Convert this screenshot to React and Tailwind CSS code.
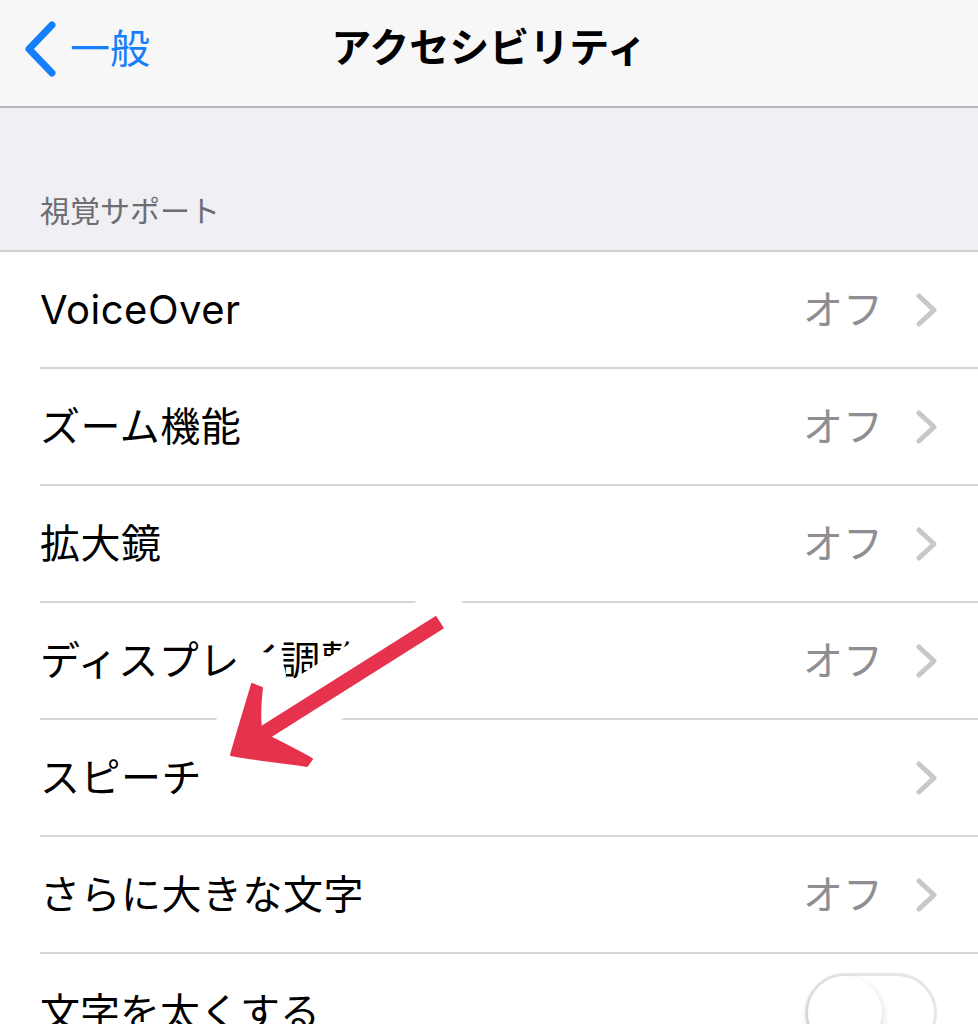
import React from "react";

const rows = [
  { label: "VoiceOver", value: "オフ" },
  { label: "ズーム機能", value: "オフ" },
  { label: "拡大鏡", value: "オフ" },
  { label: "ディスプレイ調整", value: "オフ" },
  { label: "スピーチ", value: "" },
  { label: "さらに大きな文字", value: "オフ" },
];

function Chevron() {
  return (
    <svg width="22" height="34" viewBox="0 0 22 34" className="shrink-0">
      <path
        d="M3 3 L18 17 L3 31"
        fill="none"
        stroke="#c7c7cc"
        strokeWidth="5"
        strokeLinecap="round"
        strokeLinejoin="round"
      />
    </svg>
  );
}

function Row({ label, value }) {
  return (
    <div className="pl-[40px] bg-white">
      <div className="h-[117px] flex items-center justify-between pr-[40px] border-b-2 border-[#d6d6da]">
        <span className="text-[40px] text-black tracking-[0.5px]">{label}</span>
        <div className="flex items-center gap-[33px]">
          {value && <span className="text-[40px] text-[#8e8e93]">{value}</span>}
          <Chevron />
        </div>
      </div>
    </div>
  );
}

function Arrow() {
  const head =
    "M231,755 C238,730 246,705 252,684 L262,688 C260,705 259,720 262,733 C280,742 296,750 312,759 L307,766 C282,762 256,760 231,755 Z";
  return (
    <svg
      className="absolute left-0 top-0 pointer-events-none"
      width="978"
      height="1024"
      viewBox="0 0 978 1024"
    >
      {/* white halo */}
      <line x1="440" y1="622" x2="258" y2="737" stroke="#fff" strokeWidth="60" strokeLinecap="round" />
      <path d={head} fill="#fff" stroke="#fff" strokeWidth="48" strokeLinejoin="round" />
      <circle cx="262" cy="676" r="24" fill="#fff" />
      {/* red arrow */}
      <line x1="440" y1="622" x2="256" y2="738" stroke="#e6324c" strokeWidth="15" />
      <path d={head} fill="#e6324c" stroke="#e6324c" strokeWidth="2" strokeLinejoin="round" />
    </svg>
  );
}

export default function App() {
  return (
    <div
      className="relative w-[978px] h-[1024px] overflow-hidden bg-white"
      style={{ fontFamily: '"Inter", "Noto Sans CJK JP", sans-serif' }}
    >
      {/* nav bar */}
      <div className="h-[108px] bg-[#f7f7f8] border-b-2 border-[#b8b8bc] relative flex items-start">
        <div className="absolute left-[22px] top-[20px] flex items-center gap-[12px] text-[#157efb]">
          <svg width="36" height="58" viewBox="0 0 36 58">
            <path
              d="M30 5 L7 29 L30 53"
              fill="none"
              stroke="#157efb"
              strokeWidth="7"
              strokeLinecap="round"
              strokeLinejoin="round"
            />
          </svg>
          <span className="text-[40px] leading-none">一般</span>
        </div>
        <div className="w-full h-[96px] flex items-center justify-center">
          <span className="text-[40px] font-bold text-black leading-none">アクセシビリティ</span>
        </div>
      </div>

      {/* section header */}
      <div className="h-[144px] bg-[#efeff4] border-b-2 border-[#cfcfd3] flex items-end px-[40px] pb-[16px]">
        <span className="text-[30px] text-[#6d6d72]">視覚サポート</span>
      </div>

      {/* rows */}
      {rows.map((r) => (
        <Row key={r.label} label={r.label} value={r.value} />
      ))}

      {/* toggle row */}
      <div className="pl-[40px] bg-white">
        <div className="h-[117px] flex items-center justify-between pr-[41px]">
          <span className="text-[40px] text-black">文字を太くする</span>
          <div className="w-[132px] h-[80px] rounded-full border-[3px] border-[#e5e5ea] bg-white flex items-center">
            <div className="w-[74px] h-[74px] rounded-full bg-white shadow-[0_4px_8px_rgba(0,0,0,0.18),0_2px_1px_rgba(0,0,0,0.06)]" />
          </div>
        </div>
      </div>

      <Arrow />
    </div>
  );
}
